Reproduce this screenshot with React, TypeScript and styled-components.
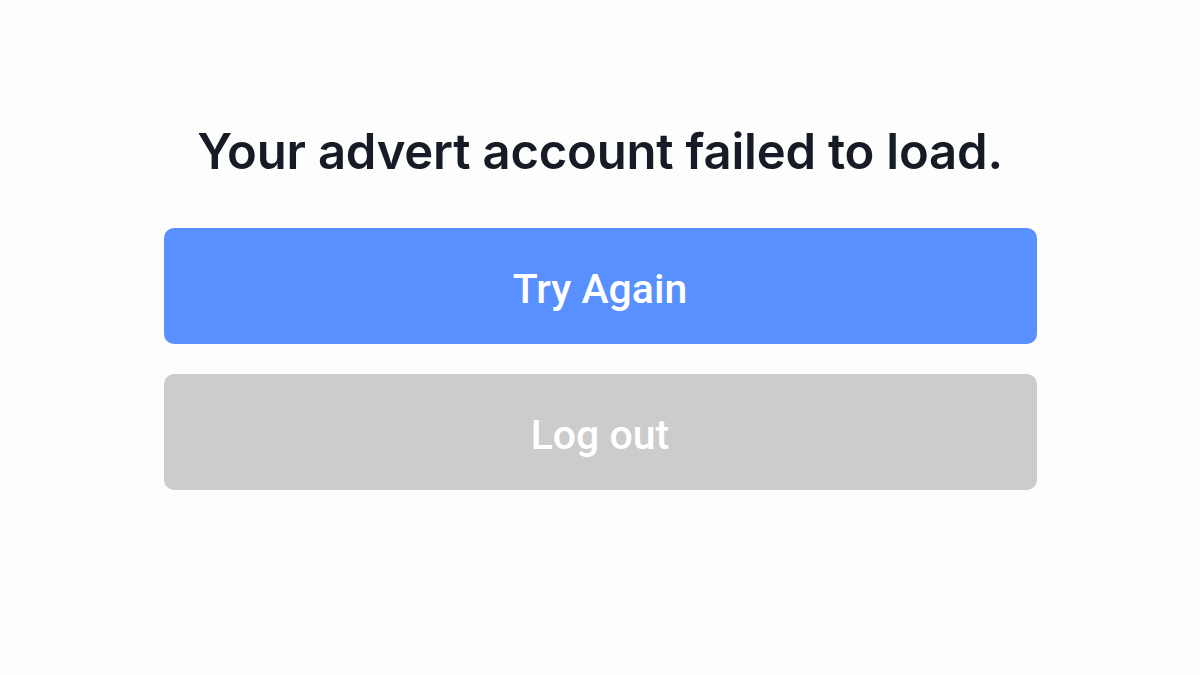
import React from "react";
import styled, { createGlobalStyle } from "styled-components";

const Global = createGlobalStyle`
  html, body { margin: 0; padding: 0; background: #fdfdfd; }
  body { font-family: Inter, "Noto Sans", sans-serif; }
`;

const Page = styled.main`
  width: 1200px;
  height: 675px;
  display: flex;
  flex-direction: column;
  align-items: center;
  padding-top: 118px;
  box-sizing: border-box;
`;

const Title = styled.h1`
  margin: 0 0 42px;
  font-family: Inter, "Noto Sans", sans-serif;
  font-weight: 600;
  font-size: 49px;
  line-height: 68px;
  color: #161b26;
  letter-spacing: -0.2px;
`;

const Actions = styled.div`
  width: 873px;
  display: flex;
  flex-direction: column;
  gap: 30px;
`;

const Button = styled.button<{ $variant: "primary" | "muted" }>`
  height: 116px;
  padding: 6px 0 0;
  border: none;
  border-radius: 10px;
  background: ${(p) => (p.$variant === "primary" ? "#5890ff" : "#cccccc")};
  color: #ffffff;
  font-family: Roboto, "Noto Sans", sans-serif;
  font-weight: 500;
  font-size: 41px;
  cursor: pointer;
`;

export default function App() {
  return (
    <>
      <Global />
      <Page>
        <Title>Your advert account failed to load.</Title>
        <Actions>
          <Button $variant="primary">Try Again</Button>
          <Button $variant="muted">Log out</Button>
        </Actions>
      </Page>
    </>
  );
}
